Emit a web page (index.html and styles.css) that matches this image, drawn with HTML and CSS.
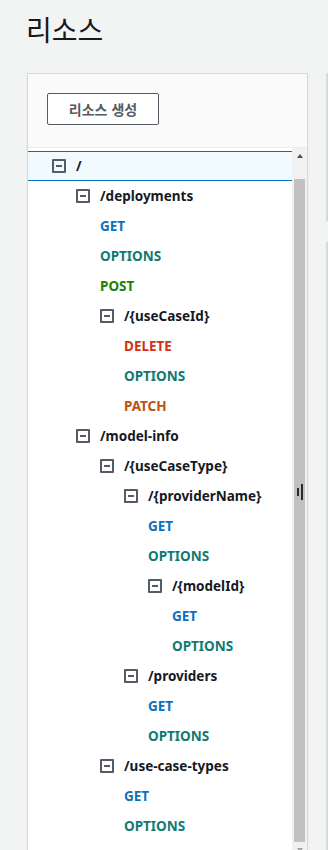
FILE: index.html
```html
<!DOCTYPE html>
<html lang="ko">

<head>
  <meta charset="UTF-8">
  <meta name="viewport" content="width=device-width, initial-scale=1.0">
  <title>리소스</title>
  <link rel="stylesheet" href="styles.css">
</head>

<body>

  <header class="page-header">
    <h1>리소스</h1>
  </header>

  <div class="layout">
    <!-- Resource tree panel -->
    <section class="panel">
      <div class="panel-head">
        <button class="btn">리소스 생성</button>
      </div>

      <div class="tree-wrap">
        <ul class="tree">
          <li class="row res lv0 selected"><span class="toggle"></span>/</li>
          <li class="row res lv1"><span class="toggle"></span>/deployments</li>
          <li class="row method get lv2">GET</li>
          <li class="row method options lv2">OPTIONS</li>
          <li class="row method post lv2">POST</li>
          <li class="row res lv2"><span class="toggle"></span>/{useCaseId}</li>
          <li class="row method delete lv3">DELETE</li>
          <li class="row method options lv3">OPTIONS</li>
          <li class="row method patch lv3">PATCH</li>
          <li class="row res lv1"><span class="toggle"></span>/model-info</li>
          <li class="row res lv2"><span class="toggle"></span>/{useCaseType}</li>
          <li class="row res lv3"><span class="toggle"></span>/{providerName}</li>
          <li class="row method get lv4">GET</li>
          <li class="row method options lv4">OPTIONS</li>
          <li class="row res lv4"><span class="toggle"></span>/{modelId}</li>
          <li class="row method get lv5">GET</li>
          <li class="row method options lv5">OPTIONS</li>
          <li class="row res lv3"><span class="toggle"></span>/providers</li>
          <li class="row method get lv4">GET</li>
          <li class="row method options lv4">OPTIONS</li>
          <li class="row res lv2"><span class="toggle"></span>/use-case-types</li>
          <li class="row method get lv3">GET</li>
          <li class="row method options lv3">OPTIONS</li>
        </ul>

        <!-- Scrollbar column -->
        <div class="scroll">
          <div class="arrow up"></div>
          <div class="track-gap"></div>
          <div class="thumb"><span class="grip"></span></div>
          <div class="arrow down"></div>
        </div>
      </div>
    </section>

    <!-- Edge of the next panel -->
    <aside class="side">
      <div class="side-box first"></div>
      <div class="side-box"></div>
    </aside>
  </div>

</body>

</html>
```

FILE: styles.css
```css
* {
  margin: 0;
  padding: 0;
  box-sizing: border-box;
}

html,
body {
  height: 850px;
  overflow: hidden;
}

body {
  width: 328px;
  background-color: #f2f3f3;
  font-family: 'Noto Sans', 'Noto Sans CJK KR', sans-serif;
  color: #16191f;
}

/* Page title */
.page-header {
  padding: 12px 0 0 26px;
}

.page-header h1 {
  font-family: 'Noto Sans CJK KR', 'Noto Sans', sans-serif;
  font-size: 28px;
  font-weight: 400;
  line-height: 34px;
  color: #16191f;
}

.layout {
  display: flex;
  margin-top: 27px;
  padding-left: 27px;
  gap: 18px;
}

/* Panel */
.panel {
  width: 281px;
  flex-shrink: 0;
  border: 1px solid #d5dbdb;
  border-bottom: none;
  background-color: #fafafa;
  box-shadow: 0 1px 1px rgba(0, 28, 36, 0.1);
}

.panel-head {
  padding: 19px 0 22px 19px;
  border-bottom: 1px solid #eaeded;
}

.btn {
  width: 112px;
  height: 32px;
  border: 1px solid #545b64;
  border-radius: 2px;
  background-color: #fff;
  color: #545b64;
  font-family: 'Noto Sans CJK KR', sans-serif;
  font-size: 14px;
  font-weight: 700;
}

.tree-wrap {
  display: flex;
  height: 709px;
  background-color: #fff;
}

/* Tree rows */
.tree {
  flex: 1;
  list-style: none;
  padding-top: 3px;
}

.row {
  display: flex;
  align-items: center;
  height: 30px;
  font-size: 13.5px;
  font-weight: 700;
  white-space: nowrap;
}

.row.selected {
  background-color: #f1faff;
  border-top: 1px solid #0073bb;
  border-bottom: 1px solid #0073bb;
}

.toggle {
  position: relative;
  width: 14px;
  height: 14px;
  margin-right: 10px;
  border: 2px solid #545b64;
  border-radius: 1px;
  flex-shrink: 0;
}

.toggle::after {
  content: '';
  position: absolute;
  left: 2px;
  top: 4px;
  width: 6px;
  height: 2px;
  background-color: #545b64;
}

.lv0 { padding-left: 24px; }
.lv1 { padding-left: 48px; }
.lv2 { padding-left: 72px; }
.lv3 { padding-left: 96px; }
.lv4 { padding-left: 120px; }
.lv5 { padding-left: 144px; }

/* Method colours */
.get { color: #0f6fba; }
.options { color: #0e7a72; }
.post { color: #1d8102; }
.delete { color: #d13212; }
.patch { color: #bc5110; }

/* Scrollbar */
.scroll {
  display: flex;
  flex-direction: column;
  width: 15px;
  background-color: #f1f1f1;
}

.arrow {
  height: 15px;
  display: flex;
  align-items: center;
  justify-content: center;
}

.arrow::before {
  content: '';
  border-left: 3.5px solid transparent;
  border-right: 3.5px solid transparent;
}

.arrow.up::before {
  border-bottom: 4px solid #505050;
}

.arrow.down::before {
  border-top: 4px solid #a3a3a3;
}

.track-gap {
  height: 16px;
}

.thumb {
  position: relative;
  flex: 1;
  margin: 0 2px;
  background-color: #c1c1c1;
}

/* Splitter grip drawn over the thumb */
.grip {
  position: absolute;
  left: 3px;
  top: 309px;
  width: 2px;
  height: 8px;
  background-color: #2b2b2b;
}

.grip::after {
  content: '';
  position: absolute;
  left: 4px;
  top: -4px;
  width: 2px;
  height: 16px;
  background-color: #2b2b2b;
}

/* Next panel edge */
.side {
  flex: 1;
  display: flex;
  flex-direction: column;
  gap: 21px;
}

.side-box {
  height: 700px;
  border: 1px solid #d5dbdb;
  background-color: #fafafa;
}

.side-box.first {
  height: 148px;
}
```
